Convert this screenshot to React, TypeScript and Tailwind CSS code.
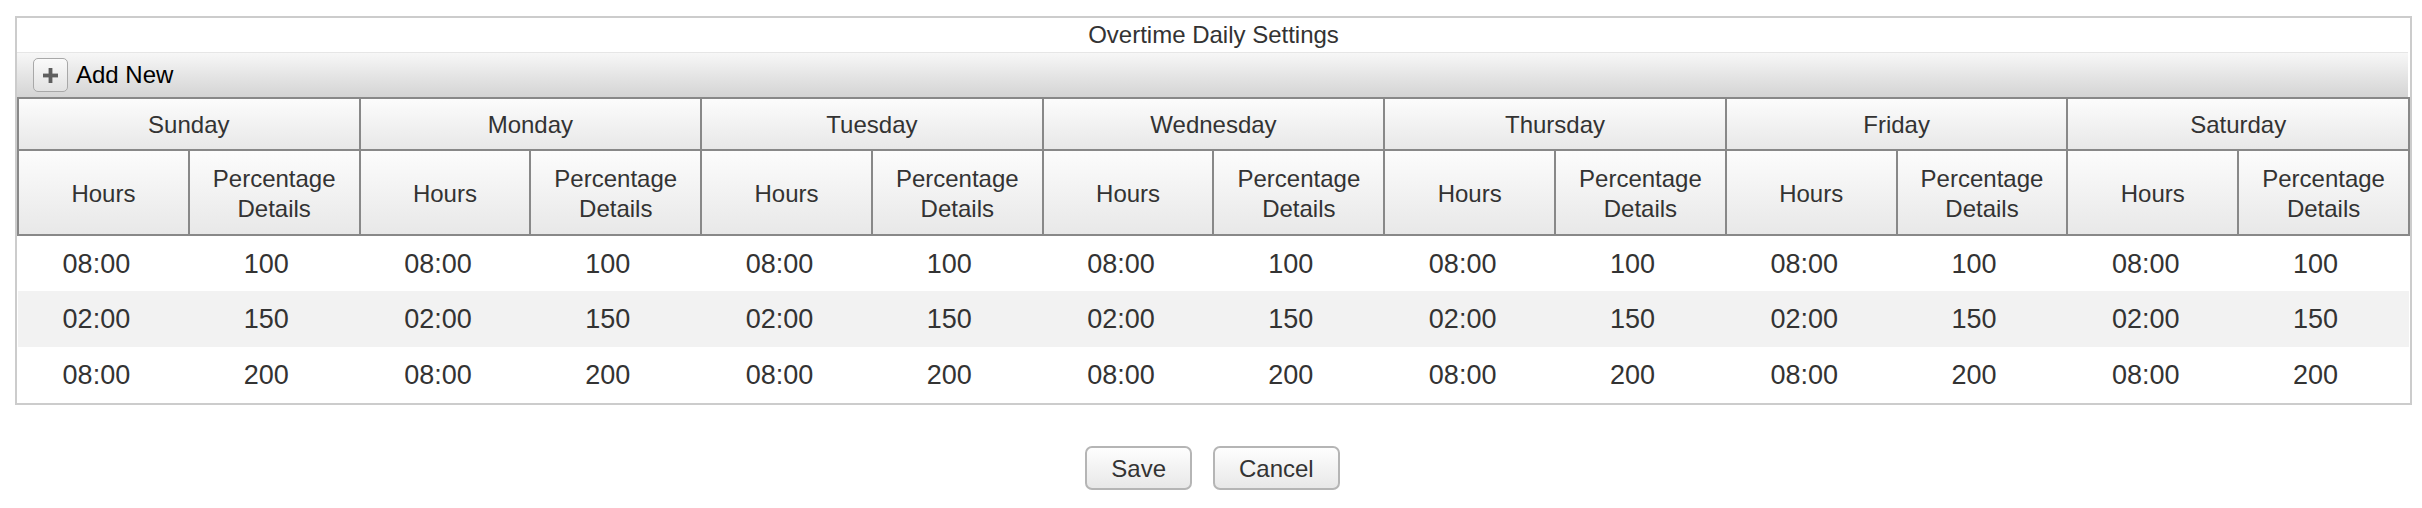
import React from "react";

const days = ["Sunday", "Monday", "Tuesday", "Wednesday", "Thursday", "Friday", "Saturday"];
const rows = [
  ["08:00", "100"],
  ["02:00", "150"],
  ["08:00", "200"],
];

export default function App() {
  return (
    <div
      className="w-[2422px] h-[508px] bg-white text-[#333]"
      style={{ fontFamily: '"Liberation Sans", Arial, sans-serif' }}
    >
      <div className="pt-[16px] pl-[15px] pr-[10px]">
        <div className="border-2 border-[#cccccc]">
          <div className="h-[34px] flex items-center justify-center text-[24px] leading-none text-[#333]">
            Overtime Daily Settings
          </div>
          <div className="mr-[2px] h-[45px] border-t border-[#e6e6e6] bg-linear-to-b from-[#f7f7f7] to-[#d4d4d4] flex items-center pl-[16px] gap-[8px]">
            <div className="w-[35px] h-[34px] rounded-[5px] border border-[#a8a8a8] bg-linear-to-b from-[#fafafa] to-[#e2e2e2] flex items-center justify-center">
              <svg width="17" height="17" viewBox="0 0 17 17">
                <rect x="6.6" y="1" width="3.8" height="15" fill="#5e5e5e" />
                <rect x="1" y="6.6" width="15" height="3.8" fill="#5e5e5e" />
              </svg>
            </div>
            <span className="text-[24px] leading-none text-black">Add New</span>
          </div>
          <table className="w-full table-fixed border-collapse">
            <colgroup>
              {Array.from({ length: 14 }).map((_, i) => (
                <col key={i} />
              ))}
            </colgroup>
            <thead>
              <tr className="h-[52px]">
                {days.map((d) => (
                  <th
                    key={d}
                    colSpan={2}
                    className="border-2 border-[#888888] bg-linear-to-b from-[#fcfcfc] to-[#e8e8e8] font-normal text-[24px] leading-[30px] pt-[2px] text-[#333] text-center"
                  >
                    {d}
                  </th>
                ))}
              </tr>
              <tr className="h-[85px]">
                {days.map((d) => (
                  <React.Fragment key={d}>
                    <th className="border-2 border-[#888888] bg-linear-to-b from-[#fcfcfc] to-[#e8e8e8] font-normal text-[24px] leading-[30px] pt-[2px] text-[#333] text-center">
                      Hours
                    </th>
                    <th className="border-2 border-[#888888] bg-linear-to-b from-[#fcfcfc] to-[#e8e8e8] font-normal text-[24px] leading-[30px] pt-[2px] text-[#333] text-center">
                      Percentage
                      <br />
                      Details
                    </th>
                  </React.Fragment>
                ))}
              </tr>
            </thead>
            <tbody>
              {rows.map((r, ri) => (
                <tr
                  key={ri}
                  className={ri === 1 ? "h-[56px] bg-[#f2f2f2]" : "h-[56px] bg-white"}
                >
                  {days.map((d) => (
                    <React.Fragment key={d}>
                      <td className="text-center text-[27px] leading-none text-[#333] pr-[14px] pt-[1px]">
                        {r[0]}
                      </td>
                      <td className="text-center text-[27px] leading-none text-[#333] pr-[16px] pt-[1px]">
                        {r[1]}
                      </td>
                    </React.Fragment>
                  ))}
                </tr>
              ))}
            </tbody>
          </table>
        </div>
      </div>
      <div className="mt-[41px] flex justify-center gap-[21px] pl-[3px]">
        <button className="h-[44px] px-[24px] pt-[2px] rounded-[7px] border-2 border-[#b5b5b5] bg-linear-to-b from-[#fefefe] to-[#e8e8e8] text-[24px] leading-none text-[#333]">
          Save
        </button>
        <button className="h-[44px] px-[24px] pt-[2px] rounded-[7px] border-2 border-[#b5b5b5] bg-linear-to-b from-[#fefefe] to-[#e8e8e8] text-[24px] leading-none text-[#333]">
          Cancel
        </button>
      </div>
    </div>
  );
}
